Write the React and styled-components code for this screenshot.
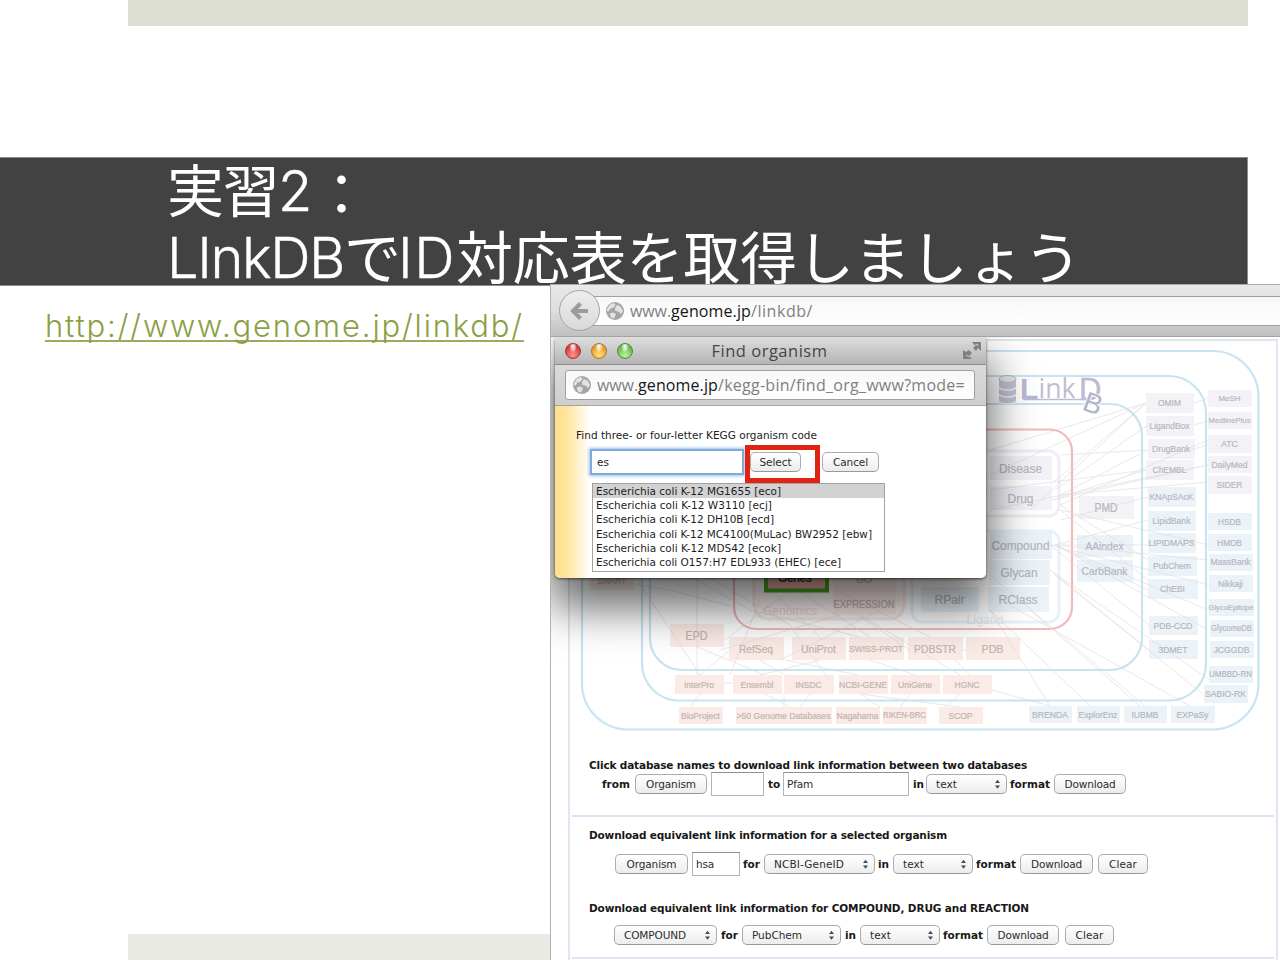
import React, { useLayoutEffect, useRef } from "react";
import styled, { createGlobalStyle } from "styled-components";

const Global = createGlobalStyle`
  * { box-sizing: border-box; }
  body { margin: 0; background: #fff; overflow: hidden; }
`;

const Slide = styled.main`
  position: relative;
  display: flex;
  flex-direction: column;
  width: 1280px;
  height: 960px;
  overflow: hidden;
  background: #fff;
  font-family: Inter, "Noto Sans CJK JP", sans-serif;
`;
const Strip = styled.div`
  width: ${(p) => p.$w}px;
  height: 26px;
  margin-left: 128px;
  background: ${(p) => p.$color};
`;
const Banner = styled.header`
  width: 1248px;
  height: 129px;
  margin-top: 131px;
  padding-left: 167px;
  background: #424242;
  border: solid #8c8c8c;
  border-width: 1px 1px 1px 0;
  color: #fff;
`;
const Title = styled.h1`
  margin: -4px 0 0;
  font-family: "Noto Sans CJK JP", sans-serif;
  font-size: 57px;
  font-weight: 400;
  line-height: 67px;
  white-space: nowrap;
`;
const TitleLine = styled.div`
  display: flex;
  height: 67px;
`;
const Latin = styled.span`
  padding-top: 4px;
  font-family: Inter, sans-serif;
  font-weight: 300;
  font-size: 56px;
  -webkit-text-stroke: 0.4px #fff;
`;
const Colon = styled.span`
  padding-top: 3px;
`;
const LinkRow = styled.div`
  flex: 1;
  padding: 21px 0 0 45px;
`;
const SlideLink = styled.a`
  display: inline-block;
  height: 35px;
  line-height: 38px;
  font-size: 31px;
  font-weight: 300;
  color: #8ba044;
  border-bottom: 2px solid #9aac5e;
`;

const FitBox = styled.span`
  display: inline-block;
  width: ${(p) => p.$w}px;
  flex: none;
  white-space: pre;
`;

/* Spreads a run of text over a fixed width by adjusting its tracking. */
function Fit({ w, children }) {
  const ref = useRef(null);
  useLayoutEffect(() => {
    const el = ref.current;
    el.style.letterSpacing = "0px";
    const n = Math.max(1, el.textContent.length);
    el.style.letterSpacing = (w - el.getBoundingClientRect().width) / n + "px";
  });
  return (
    <FitBox $w={w}>
      <span ref={ref}>{children}</span>
    </FitBox>
  );
}

const Browser = styled.section`
  position: absolute;
  left: 550px;
  top: 284px;
  width: 730px;
  height: 676px;
  overflow: hidden;
  border-left: 1px solid #b2b2b2;
  background: #fff;
`;
const Toolbar = styled.div`
  position: relative;
  z-index: 2;
  display: flex;
  align-items: center;
  height: 53px;
  padding-left: 8px;
  border-top: 1px solid #aaa;
  border-bottom: 1px solid #a3a3a3;
  background: linear-gradient(#e9e9e9, #dedede 50%, #bfbfbf);
`;
const Back = styled.div`
  display: flex;
  z-index: 1;
  align-items: center;
  justify-content: center;
  width: 41px;
  height: 41px;
  border: 1px solid #a2a2a2;
  border-radius: 50%;
  background: linear-gradient(#eee, #d9d9d9);
`;
const Address = styled.div`
  display: flex;
  flex: 1;
  align-items: center;
  height: ${(p) => p.$h}px;
  margin-left: ${(p) => p.$ml || 0}px;
  margin-right: ${(p) => p.$mr || 0}px;
  padding-left: ${(p) => p.$pl}px;
  gap: 5px;
  border: 1px solid #a0a0a0;
  border-radius: ${(p) => p.$r || 0}px;
  background: linear-gradient(#f7f7f7, #fff);
  color: #808080;
  font: 16px "Open Sans", "Noto Sans", sans-serif;
  b { font-weight: 500; color: #161616; }
`;

const Page = styled.div`
  display: flex;
  flex-direction: column;
  width: 710px;
  height: 640px;
  margin: 2px 0 0 17px;
  border: 2px solid #dfe6f1;
  font-family: "DejaVu Sans", sans-serif;
  font-size: 10px;
  color: #181818;
`;
const Block = styled.div`
  height: ${(p) => p.$h}px;
  padding: ${(p) => p.$pt}px 0 0 17px;
  margin: 0 2px;
  border-bottom: 2px solid #dbe4f0;
`;
const Heading = styled.h2`
  margin: ${(p) => p.$mt || 0}px 0 0;
  height: 18px;
  font-size: 10.5px;
  line-height: 18px;
  font-weight: 700;
`;
const FormRow = styled.div`
  display: flex;
  align-items: center;
  height: 20px;
  margin-top: ${(p) => p.$mt || 0}px;
  padding-left: ${(p) => p.$pl}px;
`;
const Word = styled.b`
  display: flex;
  margin: 0 ${(p) => p.$mr ?? 4}px 0 ${(p) => p.$ml ?? 4}px;
  font-size: 10.5px;
`;
const Push = styled.span`
  display: flex;
  flex: none;
  align-items: center;
  justify-content: center;
  width: ${(p) => p.$w}px;
  height: 20px;
  margin-left: ${(p) => p.$ml || 0}px;
  border: 1.5px solid #acacac;
  border-bottom-color: #999;
  border-radius: 5px;
  background: linear-gradient(#fff, #f6f6f6 50%, #ececec);
  font-size: 10.5px;
  color: #2c2c2c;
`;
const Choice = styled(Push)`
  justify-content: space-between;
  padding: 0 6px 0 9px;
`;
const Entry = styled.span`
  display: flex;
  flex: none;
  align-items: center;
  width: ${(p) => p.$w}px;
  height: 24px;
  margin-left: ${(p) => p.$ml || 0}px;
  padding-left: 3px;
  border: 1.5px solid #b5b5b5;
  border-top-color: #8f8f8f;
  background: #fff;
  font-size: 10.5px;
  color: #2c2c2c;
`;

const Popup = styled.section`
  position: absolute;
  left: 4px;
  top: 53px;
  width: 431px;
  height: 241px;
  border-radius: 4px 4px 5px 5px;
  background: #fff;
  box-shadow: 0 25px 46px 4px rgba(0, 0, 0, 0.62), 0 1px 3px rgba(0, 0, 0, 0.6);
  font-family: "DejaVu Sans", sans-serif;
`;
const TitleBar = styled.div`
  display: flex;
  align-items: center;
  height: 28px;
  padding: 0 4px 0 9.5px;
  border-bottom: 1px solid #8d8d8d;
  background: linear-gradient(#dedede, #b5b5b5);
`;
const Lights = styled.div`
  display: flex;
  gap: 10px;
`;
const Light = styled.i`
  width: 16px;
  height: 16px;
  border: 1px solid ${(p) => p.$edge};
  border-radius: 50%;
  background: radial-gradient(ellipse at 50% 18%, #fff 0, #fff8 22%, transparent 38%),
    radial-gradient(circle at 50% 80%, ${(p) => p.$glow}, ${(p) => p.$color} 70%);
`;
const PopupTitle = styled.div`
  flex: 1;
  padding-left: 79px;
  font: 16.5px "Open Sans", sans-serif;
  color: #454545;
`;
const PopupBar = styled.div`
  display: flex;
  align-items: center;
  height: 41px;
  padding: 0 11px 0 10px;
  border-bottom: 1px solid #a5a5a5;
  background: linear-gradient(#dadada, #cfcfcf);
`;
const PopupBody = styled.div`
  height: 172px;
  padding: 20px 0 0 21px;
  border-radius: 0 0 5px 5px;
  background: linear-gradient(90deg, #ffe08a 0, #ffe59e 12px, #fff 35px);
  font-size: 10.5px;
  color: #1d1d1d;
`;
const Prompt = styled.div`
  height: 18px;
  line-height: 18px;
`;
const SearchRow = styled.div`
  display: flex;
  align-items: center;
  height: 36px;
  margin-left: 14px;
`;
const SearchInput = styled.div`
  width: 154px;
  height: 26px;
  padding-left: 5px;
  border: 2px solid #7eabdc;
  box-shadow: 0 0 3px 1px #9bbfe6;
  line-height: 22px;
  background: #fff;
`;
const Marker = styled.div`
  display: flex;
  align-items: flex-start;
  width: 75px;
  height: 38px;
  margin: 3px 2px 0 1px;
  padding-top: 2px;
  border: 5px solid #e02412;
`;
const Results = styled.ul`
  width: 293px;
  height: 89px;
  margin: 3px 0 0 16px;
  padding: 0;
  border: 1px solid #a2a2a2;
  background: #fff;
  list-style: none;
`;
const Result = styled.li`
  height: 14.2px;
  padding-left: 3px;
  line-height: 15.5px;
  background: ${(p) => (p.$on ? "#d2d2d2" : "transparent")};
`;

const Globe = () => (
  <svg width="20" height="20" viewBox="0 0 20 20">
    <circle cx="10" cy="10" r="9" fill="#a5a5a5" />
    <path d="M5 3.500 9 2l1.500 2-2 2.500-3 1L3 11 1.500 9zM12 4l3.500 1.500L18 10l-2 3-2.500-2.500-3-.5-.5-3zM4.500 12.500l4-1 2.500 2-2 4-3-1z" fill="#f2f2f2" opacity=".8" />
  </svg>
);
const Arrows = () => (
  <svg width="5" height="10" viewBox="0 0 5 10">
    <path d="M0 4h5L2.500 .8zM0 6.500h5L2.500 9.700z" fill="#4b4b4b" />
  </svg>
);
const Expand = () => (
  <svg width="20" height="19" viewBox="0 0 20 19" fill="#808080">
    <path d="M10 1h9v9l-3-3-2 3-3-3 2-2zM1 9l3 2 3-2 3 3-3 3 3 3H1z" />
    <path d="M12 5l3-2 1 2M4 14l3 2" stroke="#ccc" fill="none" />
  </svg>
);

const tints = { p: "#f4f2f7", b: "#ebf3f9", r: "#fbebe6" };
/* kind, left, top, width, height, label, label width, font size */
const nodes = [
  ["p", 990, 456, 62, 24, "Disease", 43, 13],
  ["p", 990, 486, 62, 24, "Drug", 26, 13],
  ["b", 990, 532, 62, 27, "Compound", 58, 13],
  ["b", 989, 560, 61, 25, "Glycan", 37, 13],
  ["b", 988, 587, 61, 25, "RClass", 39, 13],
  ["b", 921, 587, 58, 25, "RPair", 30, 13],
  ["p", 1079, 496, 55, 23, "PMD", 23, 12],
  ["b", 1077, 535, 56, 22, "AAindex", 38, 11],
  ["b", 1077, 560, 56, 22, "CarbBank", 46, 11],
  ["p", 1146, 393, 48, 20, "OMIM", 23, 9],
  ["p", 1146, 416, 48, 20, "LigandBox", 40, 9],
  ["p", 1148, 439, 47, 20, "DrugBank", 38, 9],
  ["p", 1146, 460, 48, 20, "ChEMBL", 34, 9],
  ["b", 1148, 487, 48, 20, "KNApSAcK", 44, 9],
  ["b", 1148, 511, 48, 20, "LipidBank", 38, 9],
  ["b", 1148, 533, 48, 20, "LIPIDMAPS", 46, 9],
  ["b", 1148, 556, 49, 20, "PubChem", 38, 9],
  ["b", 1148, 579, 50, 20, "ChEBI", 25, 9],
  ["b", 1149, 616, 49, 19, "PDB-CCD", 39, 9],
  ["b", 1149, 640, 49, 19, "3DMET", 29, 9],
  ["p", 1208, 390, 44, 17, "MeSH", 22, 8],
  ["p", 1208, 412, 44, 17, "MedlinePlus", 42, 8],
  ["p", 1208, 435, 44, 18, "ATC", 17, 9],
  ["p", 1208, 456, 44, 17, "DailyMed", 36, 9],
  ["p", 1208, 476, 44, 18, "SIDER", 26, 9],
  ["b", 1208, 513, 44, 17, "HSDB", 23, 9],
  ["b", 1208, 534, 44, 17, "HMDB", 25, 9],
  ["b", 1209, 554, 44, 17, "MassBank", 40, 8.5],
  ["b", 1209, 575, 44, 17, "Nikkaji", 25, 9],
  ["b", 1209, 599, 45, 17, "GlycoEpitope", 45, 8],
  ["b", 1210, 620, 44, 17, "GlycomeDB", 41, 8.5],
  ["b", 1210, 641, 44, 17, "JCGGDB", 36, 9],
  ["b", 1209, 666, 44, 17, "UMBBD-RN", 43, 8.5],
  ["b", 1204, 685, 44, 18, "SABIO-RK", 41, 9],
  ["b", 1029, 706, 43, 17, "BRENDA", 36, 9],
  ["b", 1077, 706, 43, 17, "ExplorEnz", 39, 9],
  ["b", 1124, 706, 43, 17, "IUBMB", 27, 9],
  ["b", 1171, 706, 44, 17, "EXPaSy", 32, 9],
  ["r", 590, 572, 44, 18, "SMART", 29, 9],
  ["r", 833, 566, 63, 26, "GO", 16, 10],
  ["r", 833, 593, 63, 22, "EXPRESSION", 61, 10],
  ["r", 670, 624, 54, 23, "EPD", 22, 12],
  ["r", 729, 637, 55, 23, "RefSeq", 34, 11.5],
  ["r", 792, 637, 54, 23, "UniProt", 35, 11.5],
  ["r", 849, 637, 55, 23, "SWISS-PROT", 54, 9.5],
  ["r", 908, 637, 55, 23, "PDBSTR", 42, 11.5],
  ["r", 966, 637, 54, 23, "PDB", 22, 11.5],
  ["r", 675, 675, 49, 19, "InterPro", 30, 9],
  ["r", 733, 675, 49, 19, "Ensembl", 33, 9],
  ["r", 784, 675, 50, 19, "INSDC", 26, 9],
  ["r", 839, 675, 49, 19, "NCBI-GENE", 48, 9],
  ["r", 891, 675, 49, 19, "UniGene", 34, 9],
  ["r", 943, 675, 49, 19, "HGNC", 25, 9],
  ["r", 679, 707, 44, 17, "BioProject", 39, 9],
  ["r", 736, 707, 96, 17, ">50 Genome Databases", 94, 9],
  ["r", 836, 707, 44, 17, "Nagahama", 42, 9],
  ["r", 883, 707, 44, 17, "RIKEN-BRC", 43, 8.5],
  ["r", 939, 707, 44, 17, "SCOP", 24, 9],
];
const links = [
  "M990 450 1146 403M1050 485 1146 403M1060 455 1148 450M1060 495 1148 450M1060 495 1208 482",
  "M1052 500 1146 470M1052 500 1208 465M1055 490 1148 425M1030 510 1146 403M1060 520 1148 497",
  "M990 475 1146 403M990 510 1208 465M990 490 1146 470M1060 505 1208 440M1194 403 1208 398M1194 425 1208 421M1190 450 1208 445",
  "M1055 545 1148 520M1055 545 1148 590M1055 545 1208 560M1055 545 1208 610M1055 545 1208 630M1055 575 1204 695",
  "M1050 570 1149 650M1050 570 1210 680M1050 545 1148 545M1050 545 1209 585M1050 545 1149 625M1060 510 1148 580",
  "M1060 505 1148 560M1060 510 1209 545M990 610 1090 706M990 610 1050 706M1000 600 1190 706M1030 610 1140 706M990 575 1145 706",
  "M580 575 670 590 730 606M634 575 700 675M697 560V675M680 560 790 625 829 680M670 565 750 610 860 637",
  "M730 650 700 675M725 640 790 590M720 650 840 615M760 660 785 675M785 660 858 675M820 660 760 675M870 660 915 675",
  "M760 580 820 637M800 592 870 637M840 592 930 637M850 610 910 650M900 600 780 660M860 615 960 675M760 600 730 675",
  "M700 694 690 707M784 694 784 707M860 694 880 707M910 694 900 707M960 694 945 707M765 694 790 707M810 694 800 707",
  "M725 683H733M963 650H966M697 647 765 675M955 660 970 675M860 694 960 707M992 690 1050 706",
];

const Diagram = () => (
  <svg width="705" height="400" viewBox="570 341 705 400">
    <g fill="none" stroke="#c8e4f1" strokeWidth="2.200">
      <rect x="582" y="351" width="676.500" height="378.500" rx="46" />
      <rect x="642" y="376" width="564" height="324.500" rx="37" />
      <rect x="650" y="404" width="492" height="266" rx="32" />
    </g>
    <rect x="734" y="429.500" width="338" height="199.500" rx="22" fill="none" stroke="#f2b9ba" strokeWidth="2.200" />
    <g fill="none" strokeWidth="3">
      <rect x="912" y="451" width="147" height="65" rx="10" stroke="#f0edf4" />
      <rect x="912" y="531" width="147" height="91" rx="10" stroke="#eaf2f8" />
      <rect x="754" y="451" width="150" height="168" rx="14" stroke="#f8e8e4" fill="#fef6f3" />
    </g>
    <g fontFamily="Liberation Sans, Arial, sans-serif" textAnchor="middle">
      {nodes.map(([kind, x, y, w, h]) => (
        <rect key={`${x}-${y}`} x={x} y={y} width={w} height={h} fill={tints[kind]} />
      ))}
      <g fill="none" stroke="#dbd9dc" strokeWidth=".9" opacity=".65">
        {links.map((d) => <path key={d} d={d} />)}
      </g>
      {nodes.map(([kind, x, y, w, h, label, tw, size]) => (
        <text key={label} x={x + w / 2 - 0.5} y={y + h / 2 + size * 0.35} fontSize={size} textLength={tw} lengthAdjust="spacingAndGlyphs" fill={kind === "r" ? "#c2b3b2" : "#b6b7be"} stroke={kind === "r" ? "#c2b3b2" : "#b6b7be"} strokeWidth=".2">
          {label}
        </text>
      ))}
      <text x="790" y="615" fontSize="12" textLength="54" fill="#eddbd9">Genomics</text>
      <text x="985" y="624" fontSize="12" textLength="37" fill="#dfe7ee">Ligand</text>
      <rect x="766" y="562" width="61" height="28.500" fill="#e7a9a1" stroke="#46a21d" strokeWidth="4" />
      <text x="795" y="582" fontSize="12" fontWeight="700" textLength="34" fill="#333">Genes</text>
    </g>
    <g fontFamily="Liberation Sans, Arial, sans-serif">
      <path d="M999 379v23c0 4 17 4 17 0v-23z" fill="#c3c2d2" />
      <ellipse cx="1007.500" cy="379" rx="8.500" ry="3.500" fill="#e6e5ed" stroke="#b5b4c6" />
      <path d="M999 387c1 4 16 4 17 0M999 394c1 4 16 4 17 0M999 401c1 4 16 4 17 0" stroke="#efeff4" strokeWidth="1.500" fill="none" />
      <text x="1020" y="399" fontSize="30" fontWeight="700" fill="#b9b8d2">L</text>
      <text x="1038.500" y="398" fontSize="27" fontFamily="Open Sans, sans-serif" textLength="37" lengthAdjust="spacingAndGlyphs" fill="#bfbed2">ink</text>
      <text x="1079" y="400" fontSize="31" fill="#bdbbd2" stroke="#bdbbd2" strokeWidth=".4">D</text>
      <text x="1084" y="413" fontSize="28" fill="#b5b3cb" stroke="#fff" strokeWidth="2" paintOrder="stroke" transform="rotate(20 1093 403)">B</text>
      <path d="M1023 399.500H1084" stroke="#bdbbd2" strokeWidth="1.500" />
    </g>
  </svg>
);

const PushButton = ({ w, ml, tw, children }) => (
  <Push $w={w} $ml={ml}><Fit w={tw}>{children}</Fit></Push>
);
const Select = ({ w, ml, tw, children }) => (
  <Choice $w={w} $ml={ml}><Fit w={tw}>{children}</Fit><Arrows /></Choice>
);
const Label = ({ w, ml, mr, children }) => (
  <Word $ml={ml} $mr={mr}><Fit w={w}>{children}</Fit></Word>
);

const organisms = [
  ["Escherichia coli K-12 MG1655 [eco]", 185],
  ["Escherichia coli K-12 W3110 [ecj]", 176],
  ["Escherichia coli K-12 DH10B [ecd]", 178],
  ["Escherichia coli K-12 MC4100(MuLac) BW2952 [ebw]", 276],
  ["Escherichia coli K-12 MDS42 [ecok]", 185],
  ["Escherichia coli O157:H7 EDL933 (EHEC) [ece]", 245],
];

export default function App() {
  return (
    <Slide>
      <Global />
      <Strip $w={1120} $color="#dddfd5" />
      <Banner>
        <Title>
          <TitleLine><Fit w={111}>実習</Fit><Latin><Fit w={35}>2</Fit></Latin><Colon><Fit w={57}>：</Fit></Colon></TitleLine>
          <TitleLine>
            <Latin><Fit w={177}>LInkDB</Fit></Latin><Fit w={54}>で</Fit>
            <Latin><Fit w={58}>ID</Fit></Latin><Fit w={625}>対応表を取得しましょう</Fit>
          </TitleLine>
        </Title>
      </Banner>
      <LinkRow><SlideLink><Fit w={479}>http://www.genome.jp/linkdb/</Fit></SlideLink></LinkRow>
      <Strip $w={422} $color="#e9eae3" />

      <Browser>
        <Toolbar>
          <Back>
            <svg width="22" height="22" viewBox="0 0 22 22"><path d="M11.500 3.500 4 11l7.500 7.500M4 11h15" fill="none" stroke="#9b9b9b" strokeWidth="4" /></svg>
          </Back>
          <Address $h={30} $ml={-8} $mr={-3} $pl={12}>
            <Globe />
            <span><Fit w={41}>www.</Fit><b><Fit w={80}>genome.jp</Fit></b><Fit w={62}>/linkdb/</Fit></span>
          </Address>
        </Toolbar>
        <Page>
          <Diagram />
          <Block $h={76} $pt={15}>
            <Heading><Fit w={438}>Click database names to download link information between two databases</Fit></Heading>
            <FormRow $pl={13}>
              <Label w={28} ml={0} mr={5}>from</Label>
              <PushButton w={72} tw={50}>Organism</PushButton>
              <Entry $w={53} $ml={4} />
              <Label w={12} ml={4} mr={3}>to</Label>
              <Entry $w={126}><Fit w={26}>Pfam</Fit></Entry>
              <Label w={11} ml={4} mr={2}>in</Label>
              <Select w={81} tw={21}>text</Select>
              <Label w={40} ml={3}>format</Label>
              <PushButton w={72} tw={51}>Download</PushButton>
            </FormRow>
          </Block>
          <Block $h={142} $pt={9}>
            <Heading><Fit w={358}>Download equivalent link information for a selected organism</Fit></Heading>
            <FormRow $mt={10} $pl={26}>
              <PushButton w={73} tw={50}>Organism</PushButton>
              <Entry $w={48} $ml={4}><Fit w={18}>hsa</Fit></Entry>
              <Label w={17} ml={3}>for</Label>
              <Select w={111} tw={70}>NCBI-GeneID</Select>
              <Label w={11} ml={3} mr={4}>in</Label>
              <Select w={80} tw={21}>text</Select>
              <Label w={40} ml={3}>format</Label>
              <PushButton w={73} tw={51}>Download</PushButton>
              <PushButton w={50} ml={5} tw={28}>Clear</PushButton>
            </FormRow>
            <Heading $mt={25}><Fit w={440}>Download equivalent link information for COMPOUND, DRUG and REACTION</Fit></Heading>
            <FormRow $mt={8} $pl={25}>
              <Select w={103} tw={62}>COMPOUND</Select>
              <Label w={17} ml={4}>for</Label>
              <Select w={99} tw={50}>PubChem</Select>
              <Label w={11} ml={4}>in</Label>
              <Select w={80} tw={21}>text</Select>
              <Label w={40} ml={3}>format</Label>
              <PushButton w={72} tw={51}>Download</PushButton>
              <PushButton w={49} ml={6} tw={28}>Clear</PushButton>
            </FormRow>
          </Block>
        </Page>

        <Popup>
          <TitleBar>
            <Lights>
              <Light $edge="#a33638" $color="#d3383c" $glow="#ff9390" />
              <Light $edge="#ae742a" $color="#e89a28" $glow="#ffe07b" />
              <Light $edge="#4e8b3b" $color="#68b64e" $glow="#baf29a" />
            </Lights>
            <PopupTitle><Fit w={116}>Find organism</Fit></PopupTitle>
            <Expand />
          </TitleBar>
          <PopupBar>
            <Address $h={30} $pl={6} $r={3}>
              <Globe />
              <span><Fit w={41}>www.</Fit><b><Fit w={80}>genome.jp</Fit></b><Fit w={247}>/kegg-bin/find_org_www?mode=</Fit></span>
            </Address>
          </PopupBar>
          <PopupBody>
            <Prompt><Fit w={241}>Find three- or four-letter KEGG organism code</Fit></Prompt>
            <SearchRow>
              <SearchInput><Fit w={12}>es</Fit></SearchInput>
              <Marker><PushButton w={51} tw={32}>Select</PushButton></Marker>
              <PushButton w={57} tw={35}>Cancel</PushButton>
            </SearchRow>
            <Results>
              {organisms.map(([name, w], i) => (
                <Result key={name} $on={i === 0}><Fit w={w}>{name}</Fit></Result>
              ))}
            </Results>
          </PopupBody>
        </Popup>
      </Browser>
    </Slide>
  );
}
